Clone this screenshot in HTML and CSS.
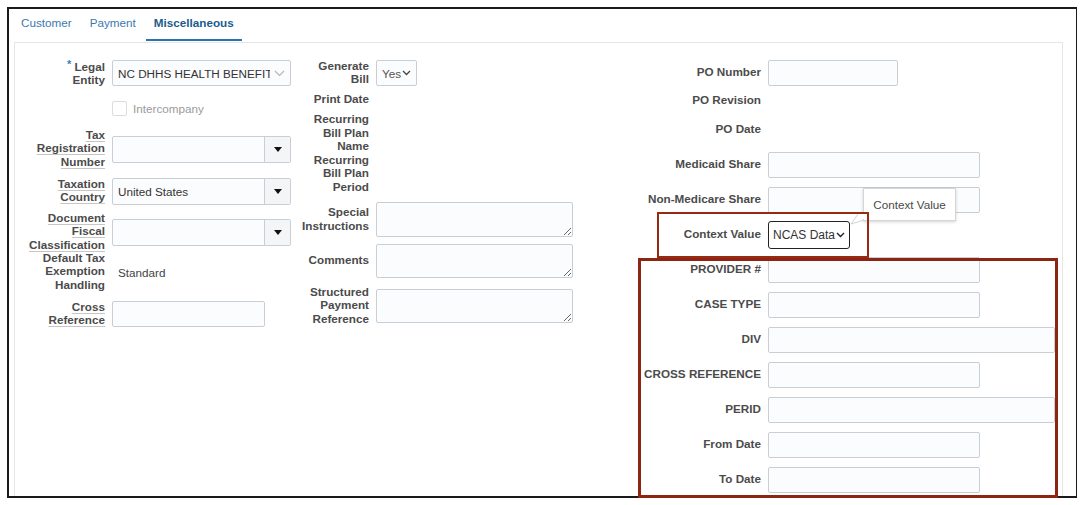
FILE: index.html
```html
<!DOCTYPE html>
<html lang="en">
<head>
  <meta charset="UTF-8">
  <title>Miscellaneous</title>
  <link rel="stylesheet" href="styles.css">
</head>
<body>

  <div class="shot">
    <div class="frame">

      <!-- Abas -->
      <div class="tabs">
        <span class="tab">Customer</span>
        <span class="tab">Payment</span>
        <span class="tab active">Miscellaneous</span>
      </div>

      <div class="panel">

        <!-- Coluna 1 -->
        <div class="col col-a">
          <div class="lbl"><span class="req">*</span> Legal<br>Entity</div>
          <div class="f select w179">
            <span class="sel-text">NC DHHS HEALTH BENEFIT</span>
            <svg width="11" height="7" viewBox="0 0 11 7"><polyline points="1,1 5.5,5.5 10,1" fill="none" stroke="#b4b4b4" stroke-width="1.1"/></svg>
          </div>

          <div class="f check-row">
            <span class="box"></span>
            <span class="muted">Intercompany</span>
          </div>

          <div class="lbl"><span class="help">Tax</span><br><span class="help">Registration</span><br><span class="help">Number</span></div>
          <div class="f combo">
            <span class="combo-text"></span>
            <span class="combo-btn"><svg width="8" height="5" viewBox="0 0 8 5"><polygon points="0,0 8,0 4,5" fill="#111"/></svg></span>
          </div>

          <div class="lbl"><span class="help">Taxation</span><br><span class="help">Country</span></div>
          <div class="f combo">
            <span class="combo-text">United States</span>
            <span class="combo-btn"><svg width="8" height="5" viewBox="0 0 8 5"><polygon points="0,0 8,0 4,5" fill="#111"/></svg></span>
          </div>

          <div class="lbl"><span class="help">Document</span><br><span class="help">Fiscal</span><br><span class="help">Classification</span></div>
          <div class="f combo">
            <span class="combo-text"></span>
            <span class="combo-btn"><svg width="8" height="5" viewBox="0 0 8 5"><polygon points="0,0 8,0 4,5" fill="#111"/></svg></span>
          </div>

          <div class="lbl">Default Tax<br>Exemption<br>Handling</div>
          <div class="f value">Standard</div>

          <div class="lbl"><span class="help">Cross</span><br><span class="help">Reference</span></div>
          <input class="f inp w153" type="text">
        </div>

        <!-- Coluna 2 -->
        <div class="col col-b">
          <div class="lbl">Generate<br>Bill</div>
          <div class="f select w41">
            <span class="sel-small">Yes</span>
            <svg width="9" height="6" viewBox="0 0 9 6"><polyline points="1,1 4.5,4.5 8,1" fill="none" stroke="#444" stroke-width="1.3"/></svg>
          </div>

          <div class="lbl">Print Date</div>

          <div class="lbl">Recurring<br>Bill Plan<br>Name</div>

          <div class="lbl">Recurring<br>Bill Plan<br>Period</div>

          <div class="lbl">Special<br>Instructions</div>
          <textarea class="f area h35"></textarea>

          <div class="lbl">Comments</div>
          <textarea class="f area h34"></textarea>

          <div class="lbl">Structured<br>Payment<br>Reference</div>
          <textarea class="f area h34"></textarea>
        </div>

        <!-- Coluna 3 -->
        <div class="col col-c">
          <div class="lbl">PO Number</div>
          <input class="f inp w130" type="text">

          <div class="lbl">PO Revision</div>

          <div class="lbl">PO Date</div>

          <div class="lbl">Medicaid Share</div>
          <input class="f inp w212" type="text">

          <div class="lbl">Non-Medicare Share</div>
          <input class="f inp w212" type="text">

          <div class="lbl">Context Value</div>
          <div class="f ctx-select">
            <span>NCAS Data</span>
            <svg width="9" height="6" viewBox="0 0 9 6"><polyline points="1,1 4.5,4.5 8,1" fill="none" stroke="#222" stroke-width="1.4"/></svg>
          </div>

          <div class="lbl">PROVIDER #</div>
          <input class="f inp w212" type="text">

          <div class="lbl">CASE TYPE</div>
          <input class="f inp w212" type="text">

          <div class="lbl">DIV</div>
          <input class="f inp w287" type="text">

          <div class="lbl">CROSS REFERENCE</div>
          <input class="f inp w212" type="text">

          <div class="lbl">PERID</div>
          <input class="f inp w287" type="text">

          <div class="lbl">From Date</div>
          <input class="f inp w212" type="text">

          <div class="lbl">To Date</div>
          <input class="f inp w212" type="text">
        </div>

      </div>
    </div>

    <!-- Dica e marcações -->
    <div class="tip">Context Value</div>
    <svg class="tip-arrow" width="16" height="12" viewBox="0 0 16 12">
      <polygon points="14,0 14,6 1,11 8,0" fill="#fff"/>
      <polyline points="8,1 1,11 14,7" fill="none" stroke="#d2d2d2" stroke-width="1"/>
    </svg>
    <div class="mark mark-ctx"></div>
    <div class="mark mark-big"></div>
  </div>

</body>
</html>
```

FILE: styles.css
```css
/* Estilos da tela */
body {
  margin: 7px;
  font-family: "Liberation Sans", Arial, sans-serif;
  font-size: 11.7px;
  color: #333;
  background: #fff;
}

.shot {
  position: relative;
  width: 1071px;
  height: 491px;
}

.frame {
  box-sizing: border-box;
  width: 100%;
  height: 100%;
  border: 2px solid #1a1a1a;
  overflow: hidden;
  background: #fff;
}

.tabs {
  display: flex;
  gap: 2px;
  height: 33px;
  padding-left: 4px;
}

.tab {
  box-sizing: border-box;
  display: flex;
  align-items: center;
  height: 32px;
  padding: 0 8px 3px 8px;
  color: #3a79b0;
  border-bottom: 2px solid transparent;
}

.tab.active {
  font-weight: bold;
  color: #1d5c8d;
  border-bottom-color: #2d73ab;
}

.panel {
  box-sizing: border-box;
  margin-left: 5px;
  width: 1049px;
  height: 520px;
  border: 1px solid #e6e6e6;
  padding-top: 14px;
  display: grid;
  grid-template-columns: 276px 282px 1fr;
  align-items: start;
}

.col {
  display: grid;
  column-gap: 7px;
  align-items: center;
}

.col-a {
  grid-template-columns: 90px 179px;
  grid-template-rows: 32px 38px 44px 40px 42px 38px 46px;
}

.col-b {
  grid-template-columns: 78px 197px;
  grid-template-rows: 32px 22px 45px 36px 55px 28px 62px;
}

.col-c {
  grid-template-columns: 188px 287px;
  grid-template-rows: 32px 24px 34px repeat(10, 35px);
}

.lbl {
  grid-column: 1;
  text-align: right;
  font-weight: bold;
  color: #4b4b4b;
  line-height: 13.5px;
  white-space: nowrap;
  margin-top: -2px;
}

.f {
  grid-column: 2;
  justify-self: start;
}

.help {
  text-decoration: underline;
  text-decoration-color: #c6c6c6;
  text-underline-offset: 2px;
}

.req {
  color: #3b7fc2;
  font-size: 11px;
  vertical-align: 3px;
}

.inp {
  display: block;
  box-sizing: border-box;
  height: 26px;
  margin: 0;
  padding: 0;
  border: 1px solid #c9ced4;
  border-radius: 2px;
  background: #fbfcfd;
}

.w41 { width: 41px; }
.w130 { width: 130px; }
.w153 { width: 153px; }
.w179 { width: 179px; }
.w212 { width: 212px; }
.w287 { width: 287px; }

.select {
  box-sizing: border-box;
  height: 26px;
  display: flex;
  align-items: center;
  justify-content: space-between;
  padding: 0 5px;
  border: 1px solid #c9ced4;
  border-radius: 2px;
  background: #fbfcfd;
}

.sel-text {
  width: 152px;
  overflow: hidden;
  text-overflow: clip;
  white-space: nowrap;
  color: #333;
}

.sel-small {
  color: #555;
}

.combo {
  box-sizing: border-box;
  width: 179px;
  height: 27px;
  display: flex;
  border: 1px solid #c9ced4;
  border-radius: 2px;
  background: #fbfcfd;
}

.combo-text {
  flex: 1;
  display: flex;
  align-items: center;
  padding-left: 5px;
  color: #333;
}

.combo-btn {
  width: 25px;
  display: flex;
  align-items: center;
  justify-content: center;
  border-left: 1px solid #c9ced4;
  background: #f4f5f7;
}

.check-row {
  display: flex;
  align-items: center;
  gap: 6px;
}

.box {
  box-sizing: border-box;
  width: 15px;
  height: 15px;
  border: 1px solid #dcdcdc;
  border-radius: 2px;
  background: #fff;
}

.muted {
  color: #9b9b9b;
}

.value {
  padding-left: 6px;
  color: #444;
}

.area {
  display: block;
  box-sizing: border-box;
  width: 197px;
  margin: 0;
  border: 1px solid #c9ced4;
  border-radius: 2px;
  background: #fbfcfd;
}

.h35 { height: 35px; }
.h34 { height: 34px; }

.ctx-select {
  box-sizing: border-box;
  width: 82px;
  height: 28px;
  display: flex;
  align-items: center;
  justify-content: space-between;
  padding: 0 4px;
  border: 1.5px solid #222;
  border-radius: 3px;
  background: #fff;
  color: #333;
  font-size: 12px;
}

.tip {
  position: absolute;
  left: 856px;
  top: 181px;
  box-sizing: border-box;
  width: 93px;
  height: 33px;
  display: flex;
  align-items: center;
  justify-content: center;
  padding-bottom: 1px;
  background: #fff;
  border: 1px solid #d6d6d6;
  box-shadow: 0 1px 3px rgba(0, 0, 0, 0.18);
  color: #4a4a4a;
}

.tip-arrow {
  position: absolute;
  left: 843px;
  top: 206px;
}

.mark {
  position: absolute;
  box-sizing: border-box;
}

.mark-ctx {
  left: 650px;
  top: 205px;
  width: 212px;
  height: 46px;
  border: 2px solid #9a2914;
}

.mark-big {
  left: 631px;
  top: 251px;
  width: 420px;
  height: 240px;
  border: 3px solid #8c2511;
}
```
